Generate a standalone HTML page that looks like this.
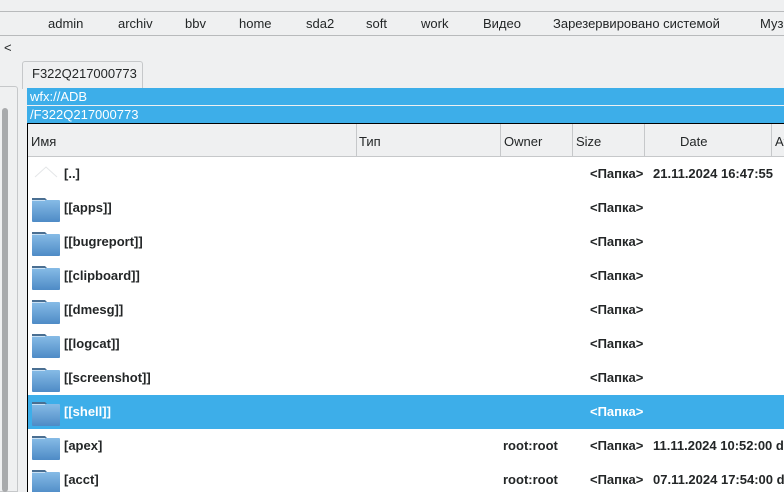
<!DOCTYPE html>
<html><head><meta charset="utf-8"><style>
*{margin:0;padding:0;box-sizing:border-box}
body{width:784px;height:492px;overflow:hidden;background:#eff0f1;font-family:"Liberation Sans","DejaVu Sans",sans-serif;font-size:13px;color:#232627;position:relative}
.a{position:absolute;white-space:nowrap}
.tb{left:0;top:11px;width:784px;height:25px;border-top:1px solid #b8babc;border-bottom:1px solid #b8babc}
.tb span{position:absolute;top:4px}
.row{position:absolute;left:28px;width:756px;height:34px;font-weight:bold;font-size:13px;white-space:nowrap;overflow:hidden}
.row span{position:absolute;top:9px;white-space:nowrap}
.f{position:absolute;left:4px;top:6px;width:28px;height:25px}
.hdr span{position:absolute;top:10px}
.sep{position:absolute;top:0;width:1px;height:33px;background:#c6c8ca}
</style></head><body>
<div class="a tb">
<span style="left:48px">admin</span><span style="left:118px">archiv</span><span style="left:185px">bbv</span><span style="left:239px">home</span><span style="left:306px">sda2</span><span style="left:366px">soft</span><span style="left:421px">work</span><span style="left:483px">Видео</span><span style="left:553px">Зарезервировано системой</span><span style="left:760px">Музыка</span>
</div>
<div class="a" style="left:4px;top:40px">&lt;</div>
<div class="a" style="left:0;top:86px;width:18px;height:406px;border:1px solid #c6c8ca;border-left:none;border-radius:0 3px 0 0"></div>
<div class="a" style="left:2px;top:108px;width:6px;height:384px;background:#a8aaac;border-radius:3px"></div>
<div class="a" style="left:22px;top:61px;width:121px;height:28px;border:1px solid #c6c8ca;border-bottom:none;border-radius:3px 3px 0 0;background:#eff0f1"></div>
<div class="a" style="left:32px;top:66px">F322Q217000773</div>
<div class="a" style="left:27px;top:88px;width:757px;height:17px;background:#3daee9;color:#fff;padding-left:3px;line-height:17px">wfx://ADB</div>
<div class="a" style="left:27px;top:106px;width:757px;height:17px;background:#3daee9;color:#fff;padding-left:3px;line-height:17px">/F322Q217000773</div>
<div class="a" style="left:27px;top:123px;width:757px;height:369px;border-left:1px solid #000;border-top:1px solid #000;background:#fff"></div>
<div class="a hdr" style="left:28px;top:124px;width:756px;height:33px;background:#eff0f1;border-bottom:1px solid #c6c8ca">
<span style="left:3px">Имя</span><span style="left:331px">Тип</span><span style="left:476px">Owner</span><span style="left:548px">Size</span><span style="left:652px">Date</span><span style="left:747px">Attr</span>
<div class="sep" style="left:328px"></div><div class="sep" style="left:472px"></div><div class="sep" style="left:544px"></div><div class="sep" style="left:616px"></div><div class="sep" style="left:743px"></div>
</div>
<svg width="0" height="0" style="position:absolute"><defs><linearGradient id="g" x1="0" y1="0" x2="0" y2="1"><stop offset="0" stop-color="#86bbe6"/><stop offset="1" stop-color="#4e8bc6"/></linearGradient></defs></svg>

<div class="row" style="top:157px"><svg class="f" viewBox="0 0 28 25"><path d="M3 14 L14 4 L25 14" fill="none" stroke="#e4e6e8"/></svg><span style="left:36px">[..]</span><span style="left:562px">&lt;Папка&gt;</span><span style="left:625px">21.11.2024 16:47:55</span></div>

<div class="row" style="top:191px"><svg class="f" viewBox="0 0 28 25"><path d="M0 1h13l2 2h-15z" fill="#4a6f92"/><rect x="0" y="3" width="28" height="22" rx="1" fill="url(#g)"/><rect x="0" y="3" width="13" height="1" fill="#c8e0f4"/></svg><span style="left:36px">[[apps]]</span><span style="left:562px">&lt;Папка&gt;</span></div>
<div class="row" style="top:225px"><svg class="f" viewBox="0 0 28 25"><path d="M0 1h13l2 2h-15z" fill="#4a6f92"/><rect x="0" y="3" width="28" height="22" rx="1" fill="url(#g)"/><rect x="0" y="3" width="13" height="1" fill="#c8e0f4"/></svg><span style="left:36px">[[bugreport]]</span><span style="left:562px">&lt;Папка&gt;</span></div>
<div class="row" style="top:259px"><svg class="f" viewBox="0 0 28 25"><path d="M0 1h13l2 2h-15z" fill="#4a6f92"/><rect x="0" y="3" width="28" height="22" rx="1" fill="url(#g)"/><rect x="0" y="3" width="13" height="1" fill="#c8e0f4"/></svg><span style="left:36px">[[clipboard]]</span><span style="left:562px">&lt;Папка&gt;</span></div>
<div class="row" style="top:293px"><svg class="f" viewBox="0 0 28 25"><path d="M0 1h13l2 2h-15z" fill="#4a6f92"/><rect x="0" y="3" width="28" height="22" rx="1" fill="url(#g)"/><rect x="0" y="3" width="13" height="1" fill="#c8e0f4"/></svg><span style="left:36px">[[dmesg]]</span><span style="left:562px">&lt;Папка&gt;</span></div>
<div class="row" style="top:327px"><svg class="f" viewBox="0 0 28 25"><path d="M0 1h13l2 2h-15z" fill="#4a6f92"/><rect x="0" y="3" width="28" height="22" rx="1" fill="url(#g)"/><rect x="0" y="3" width="13" height="1" fill="#c8e0f4"/></svg><span style="left:36px">[[logcat]]</span><span style="left:562px">&lt;Папка&gt;</span></div>
<div class="row" style="top:361px"><svg class="f" viewBox="0 0 28 25"><path d="M0 1h13l2 2h-15z" fill="#4a6f92"/><rect x="0" y="3" width="28" height="22" rx="1" fill="url(#g)"/><rect x="0" y="3" width="13" height="1" fill="#c8e0f4"/></svg><span style="left:36px">[[screenshot]]</span><span style="left:562px">&lt;Папка&gt;</span></div>
<div class="row" style="top:395px;background:#3daee9;color:#fff"><svg class="f" viewBox="0 0 28 25"><path d="M0 1h13l2 2h-15z" fill="#4a6f92"/><rect x="0" y="3" width="28" height="22" rx="1" fill="url(#g)"/><rect x="0" y="3" width="13" height="1" fill="#c8e0f4"/></svg><span style="left:36px">[[shell]]</span><span style="left:562px">&lt;Папка&gt;</span></div>
<div class="row" style="top:429px"><svg class="f" viewBox="0 0 28 25"><path d="M0 1h13l2 2h-15z" fill="#4a6f92"/><rect x="0" y="3" width="28" height="22" rx="1" fill="url(#g)"/><rect x="0" y="3" width="13" height="1" fill="#c8e0f4"/></svg><span style="left:36px">[apex]</span><span style="left:475px">root:root</span><span style="left:562px">&lt;Папка&gt;</span><span style="left:625px">11.11.2024 10:52:00 drwxr</span></div>
<div class="row" style="top:463px;height:29px"><svg class="f" viewBox="0 0 28 25"><path d="M0 1h13l2 2h-15z" fill="#4a6f92"/><rect x="0" y="3" width="28" height="22" rx="1" fill="url(#g)"/><rect x="0" y="3" width="13" height="1" fill="#c8e0f4"/></svg><span style="left:36px">[acct]</span><span style="left:475px">root:root</span><span style="left:562px">&lt;Папка&gt;</span><span style="left:625px">07.11.2024 17:54:00 drwxr</span></div>
</body></html>
